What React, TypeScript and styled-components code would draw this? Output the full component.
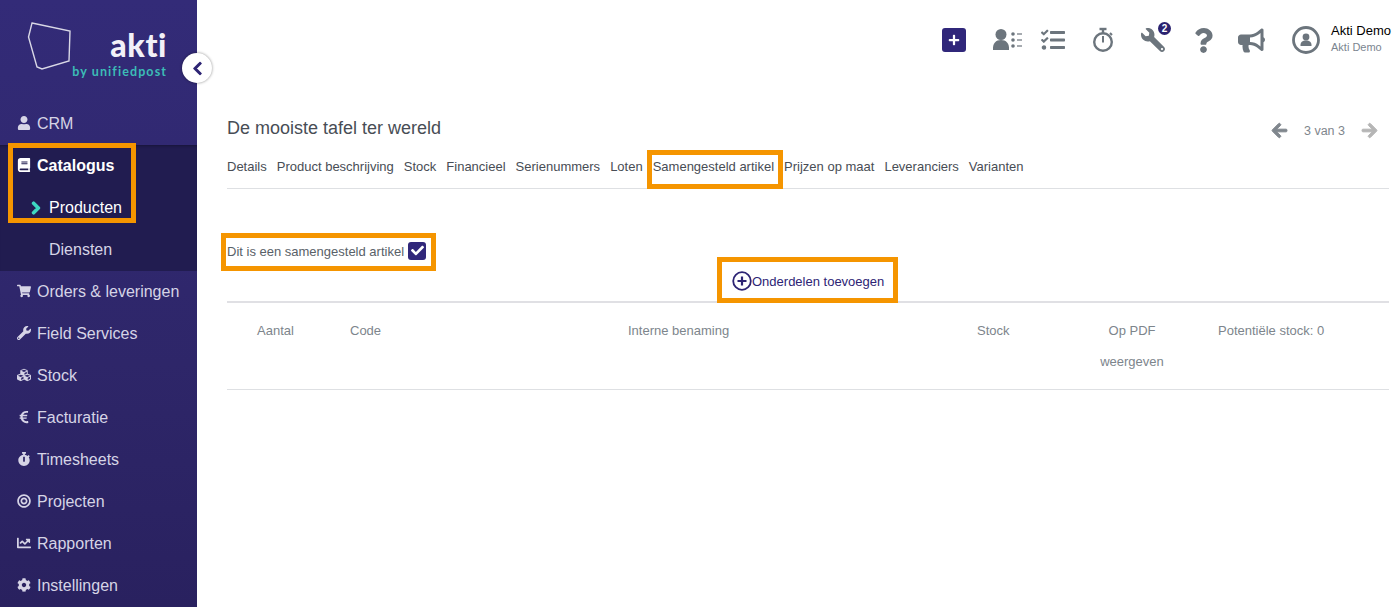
import React from "react";
import styled, { createGlobalStyle } from "styled-components";
import {
  FaUser, FaBook, FaChevronRight, FaChevronLeft, FaShoppingCart, FaWrench, FaCubes, FaEuroSign,
  FaStopwatch, FaBullseye, FaChartLine, FaCog, FaPlus, FaTasks, FaQuestion, FaBullhorn, FaArrowLeft,
  FaArrowRight, FaCheck,
} from "react-icons/fa";

const Global = createGlobalStyle`
  html, body { margin: 0; padding: 0; height: 100%; overflow: hidden; background: #fff; }
  body { font-family: "Liberation Sans", Arial, sans-serif; }
  #root { height: 100%; }
`;

const Page = styled.div`
  display: flex;
  height: 607px;
  width: 1397px;
  overflow: hidden;
`;

const Sidebar = styled.aside`
  position: relative;
  flex: 0 0 197px;
  background: linear-gradient(180deg, #332b78 0%, #2e2669 60%, #29215f 100%);
  color: #d6d4e6;
`;

const LogoArea = styled.div`
  height: 103px;
  position: relative;
  box-sizing: border-box;
  padding: 28px 30px 0 0;
  display: flex;
  flex-direction: column;
  align-items: flex-end;
`;

const LogoMark = styled.svg`
  position: absolute;
  left: 27px;
  top: 21px;
  width: 46px;
  height: 50px;
`;

const LogoWord = styled.div`
  font-family: Lato, "Liberation Sans", sans-serif;
  font-weight: 900;
  font-size: 32px;
  line-height: 34px;
  color: #f2f1f8;
  letter-spacing: 0.6px;
`;

const LogoSub = styled.div`
  font-family: Lato, "Liberation Sans", sans-serif;
  font-weight: 700;
  font-size: 12.5px;
  line-height: 14px;
  margin-top: 3px;
  color: #3cbcb6;
  letter-spacing: 1.1px;
  white-space: nowrap;
`;

const Collapse = styled.button`
  position: absolute;
  left: 182px;
  top: 53px;
  width: 30px;
  height: 30px;
  border-radius: 50%;
  border: 0;
  padding: 0;
  background: #fff;
  box-shadow: 0 0 3px rgba(0, 0, 0, 0.45);
  display: flex;
  align-items: center;
  justify-content: center;
  color: #2d2474;
  font-size: 15px;
  z-index: 2;
  & svg {
    stroke: currentColor;
    stroke-width: 30;
  }
`;

const NavItem = styled.div<{ $active?: boolean }>`
  height: 42px;
  display: flex;
  align-items: center;
  padding-left: 17px;
  font-size: 16px;
  font-weight: ${(p) => (p.$active ? 700 : 400)};
  color: ${(p) => (p.$active ? "#fff" : "#d6d4e6")};
`;

const NavIcon = styled.span`
  width: 20px;
  display: flex;
  align-items: center;
  margin-top: -3px;
  & svg {
    height: 14px;
    width: auto;
  }
`;

const SubGroup = styled.div`
  background: #211c50;
  box-shadow: inset 0 3px 3px -2px rgba(0, 0, 0, 0.3);
`;

const SubItem = styled.div<{ $active?: boolean }>`
  height: 42px;
  display: flex;
  align-items: center;
  padding-left: 49px;
  font-size: 16px;
  position: relative;
  color: ${(p) => (p.$active ? "#fff" : "#d6d4e6")};
`;

const SubArrow = styled.span`
  position: absolute;
  left: 29px;
  top: 14px;
  display: flex;
  color: #3ed7c2;
  & svg {
    height: 14px;
    width: auto;
    stroke: currentColor;
    stroke-width: 50;
  }
`;

const Marked = styled.div<{ $inset: string }>`
  position: relative;
  &::after {
    content: "";
    position: absolute;
    inset: ${(p) => p.$inset};
    border: 5px solid #f59500;
    pointer-events: none;
  }
`;

const Main = styled.main`
  flex: 1;
  min-width: 0;
  display: flex;
  flex-direction: column;
  padding: 0 8px 0 30px;
`;

const TopBar = styled.header`
  height: 102px;
  display: flex;
  align-items: flex-start;
  padding-top: 24px;
  box-sizing: border-box;
  justify-content: flex-end;
  margin-right: -2px;
  white-space: nowrap;
`;

const TopIcon = styled.div<{ $ml: number; $w: number }>`
  position: relative;
  margin-left: ${(p) => p.$ml}px;
  width: ${(p) => p.$w}px;
  height: 32px;
  display: flex;
  align-items: center;
  justify-content: center;
  color: #6c757d;
`;

const PlusSquare = styled.div`
  width: 24px;
  height: 24px;
  background: #30277a;
  border-radius: 3px;
  color: #fff;
  font-size: 12px;
  display: flex;
  align-items: center;
  justify-content: center;
`;

const Badge = styled.span`
  position: absolute;
  right: -6px;
  top: -2px;
  width: 13px;
  height: 13px;
  border-radius: 50%;
  background: #2a2270;
  color: #fff;
  font-size: 10px;
  font-weight: 700;
  line-height: 13px;
  text-align: center;
`;

const UserBlock = styled.div`
  margin-left: 11px;
  width: 60px;
  display: flex;
  flex-direction: column;
`;

const UserName = styled.div`
  font-size: 13px;
  line-height: 15px;
  color: #000;
  margin-top: -1px;
`;

const UserSub = styled.div`
  font-size: 11px;
  line-height: 13px;
  margin-top: 3px;
  color: #7b8590;
`;

const TitleRow = styled.div`
  display: flex;
  align-items: center;
  justify-content: space-between;
  height: 52px;
`;

const Title = styled.h1`
  margin: 0;
  font-size: 18px;
  font-weight: 400;
  color: #484d55;
`;

const Pager = styled.div`
  display: flex;
  align-items: center;
  gap: 16px;
  font-size: 12.5px;
  color: #7f868d;
  margin-top: 5px;
  padding-right: 11px;
`;

const PagerArrow = styled.span<{ $off?: boolean }>`
  display: flex;
  color: ${(p) => (p.$off ? "#b5b5b5" : "#7f868d")};
  & svg {
    height: 17px;
    width: auto;
    stroke: currentColor;
    stroke-width: 30;
  }
`;

const Tabs = styled.nav`
  display: flex;
  gap: 10px;
  height: 34px;
  border-bottom: 1px solid #dee0e3;
  font-size: 13px;
  line-height: 26px;
  color: #484d55;
  white-space: nowrap;
`;

const Tab = styled.span``;

const CheckRow = styled.div`
  display: flex;
  margin-top: 51px;
`;

const CheckLabel = styled.label`
  display: flex;
  align-items: center;
  gap: 4px;
  font-size: 13px;
  line-height: 24px;
  color: #596168;
`;

const CheckBox = styled.span`
  width: 18px;
  height: 18px;
  margin-top: -3px;
  border-radius: 3px;
  background: #30277a;
  color: #fff;
  font-size: 13px;
  display: flex;
  align-items: center;
  justify-content: center;
`;

const AddRow = styled.div`
  display: flex;
  padding-left: 505px;
  margin-top: 7px;
`;

const AddButton = styled.button`
  display: flex;
  align-items: center;
  padding: 0;
  background: none;
  border: 0;
  font-family: inherit;
  font-size: 13px;
  color: #2d2474;
  height: 20px;
`;

const Table = styled.div`
  display: grid;
  grid-template-columns: 123px 278px 349px 95px 120px 1fr;
  margin-top: 10px;
  border-top: 2px solid #e0e0e4;
  border-bottom: 1px solid #dee0e3;
  padding: 12px 0;
  font-size: 13px;
  line-height: 31px;
  color: #7d858c;
`;

const Cell = styled.div<{ $pad?: number; $center?: boolean }>`
  padding-left: ${(p) => p.$pad ?? 0}px;
  text-align: ${(p) => (p.$center ? "center" : "left")};
`;

const NAV_TOP: [React.ReactNode, string][] = [[<FaUser />, "CRM"]];
const NAV_BOTTOM: [React.ReactNode, string][] = [
  [<FaShoppingCart />, "Orders & leveringen"],
  [<FaWrench />, "Field Services"],
  [<FaCubes />, "Stock"],
  [<FaEuroSign />, "Facturatie"],
  [<FaStopwatch />, "Timesheets"],
  [<FaBullseye />, "Projecten"],
  [<FaChartLine />, "Rapporten"],
  [<FaCog />, "Instellingen"],
];
const TABS = [
  "Details", "Product beschrijving", "Stock", "Financieel", "Serienummers", "Loten",
  "Samengesteld artikel", "Prijzen op maat", "Leveranciers", "Varianten",
];

export default function App() {
  return (
    <Page>
      <Global />
      <Sidebar>
        <LogoArea>
          <LogoMark viewBox="0 0 46 50">
            <path d="M5 2 L43 10 L42 40 L15 48 L10 46 L1.5 16 Z" fill="none" stroke="#d9d8e6" strokeWidth="1.4" />
          </LogoMark>
          <LogoWord>akti</LogoWord>
          <LogoSub>by unifiedpost</LogoSub>
        </LogoArea>
        <Collapse aria-label="collapse"><FaChevronLeft /></Collapse>
        {NAV_TOP.map(([i, t]) => (
          <NavItem key={t}><NavIcon>{i}</NavIcon>{t}</NavItem>
        ))}
        <SubGroup>
          <Marked $inset="-2px 61px 6px 8px">
            <NavItem $active><NavIcon><FaBook /></NavIcon>Catalogus</NavItem>
            <SubItem $active><SubArrow><FaChevronRight /></SubArrow>Producten</SubItem>
          </Marked>
          <SubItem>Diensten</SubItem>
        </SubGroup>
        {NAV_BOTTOM.map(([i, t]) => (
          <NavItem key={t}><NavIcon>{i}</NavIcon>{t}</NavItem>
        ))}
      </Sidebar>
      <Main>
        <TopBar>
          <TopIcon $ml={0} $w={24}><PlusSquare><FaPlus /></PlusSquare></TopIcon>
          <TopIcon $ml={26} $w={30}>
            <svg width="30" height="24" viewBox="0 0 30 24" fill="currentColor">
              <circle cx="9" cy="6.5" r="5.5" />
              <path d="M1 22 C0.5 15 4 12 9 12 C14 12 17.5 15 17 22 Z" />
              <circle cx="21" cy="6" r="1.8" /><circle cx="21" cy="12" r="1.8" /><circle cx="21" cy="18" r="1.8" />
              <rect x="25" y="5.4" width="5" height="1.2" /><rect x="25" y="11.4" width="5" height="1.2" /><rect x="25" y="17.4" width="5" height="1.2" />
            </svg>
          </TopIcon>
          <TopIcon $ml={19} $w={24}><FaTasks size={24} /></TopIcon>
          <TopIcon $ml={27} $w={22}>
            <svg width="22" height="26" viewBox="0 0 22 26" fill="none" stroke="currentColor">
              <circle cx="11" cy="15" r="8.8" strokeWidth="2.4" />
              <path d="M7.5 2 H14.5" strokeWidth="2.4" />
              <path d="M11 2 V6" strokeWidth="2.4" />
              <path d="M18 6 L20 8" strokeWidth="2" />
              <path d="M11 9 V15.5" strokeWidth="2" />
            </svg>
          </TopIcon>
          <TopIcon $ml={27} $w={24}>
            <FaWrench size={24} style={{ transform: "scaleX(-1)" }} />
            <Badge>2</Badge>
          </TopIcon>
          <TopIcon $ml={30} $w={16}><FaQuestion size={25} style={{ flexShrink: 0 }} /></TopIcon>
          <TopIcon $ml={27} $w={27}><FaBullhorn size={27} /></TopIcon>
          <TopIcon $ml={27} $w={28}>
            <svg width="28" height="28" viewBox="0 0 28 28" fill="currentColor">
              <circle cx="14" cy="14" r="12.5" fill="none" stroke="currentColor" strokeWidth="2.8" />
              <circle cx="14" cy="11" r="3.4" />
              <path d="M8.5 20 C8.2 16 10.5 14.5 14 14.5 C17.5 14.5 19.8 16 19.5 20 Z" />
            </svg>
          </TopIcon>
          <UserBlock>
            <UserName>Akti Demo</UserName>
            <UserSub>Akti Demo</UserSub>
          </UserBlock>
        </TopBar>
        <TitleRow>
          <Title>De mooiste tafel ter wereld</Title>
          <Pager>
            <PagerArrow><FaArrowLeft /></PagerArrow>
            3 van 3
            <PagerArrow $off><FaArrowRight /></PagerArrow>
          </Pager>
        </TitleRow>
        <Tabs>
          {TABS.map((t) =>
            t === "Samengesteld artikel" ? (
              <Marked key={t} $inset="-4px -9px -1px -6px"><Tab>{t}</Tab></Marked>
            ) : (
              <Tab key={t}>{t}</Tab>
            )
          )}
        </Tabs>
        <CheckRow>
          <Marked $inset="-7px -10px -7px -6px">
            <CheckLabel>
              Dit is een samengesteld artikel
              <CheckBox><FaCheck /></CheckBox>
            </CheckLabel>
          </Marked>
        </CheckRow>
        <AddRow>
          <Marked $inset="-14px -14px -12px -15px">
            <AddButton>
              <svg width="20" height="20" viewBox="0 0 20 20" fill="none" stroke="#2d2474">
                <circle cx="10" cy="10" r="8.8" strokeWidth="1.8" />
                <path d="M10 5.5 V14.5 M5.5 10 H14.5" strokeWidth="2.2" />
              </svg>
              Onderdelen toevoegen
            </AddButton>
          </Marked>
        </AddRow>
        <Table>
          <Cell $pad={30}>Aantal</Cell>
          <Cell>Code</Cell>
          <Cell>Interne benaming</Cell>
          <Cell>Stock</Cell>
          <Cell $center>Op PDF<br />weergeven</Cell>
          <Cell $pad={26}>Potentiële stock: 0</Cell>
        </Table>
      </Main>
    </Page>
  );
}
